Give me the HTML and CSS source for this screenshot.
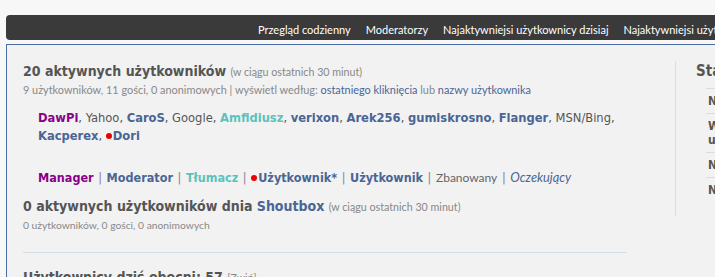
FILE: index.html
```html
<!DOCTYPE html>
<html lang="pl">
  <head>
    <meta charset="UTF-8" />
    <meta name="viewport" content="width=device-width, initial-scale=1.0" />
    <title>Kto jest online</title>
    <link rel="stylesheet" href="styles.css">
  </head>
  <body>
    <div class="wrap">
      <ul class="navbar">
        <li><a href="#">Przegląd codzienny</a></li>
        <li><a href="#">Moderatorzy</a></li>
        <li><a href="#">Najaktywniejsi użytkownicy dzisiaj</a></li>
        <li><a href="#">Najaktywniejsi użytkownicy</a></li>
      </ul>

      <div class="panel">
        <div class="main">
          <h3 class="title">20 aktywnych użytkowników <span class="hint">(w ciągu ostatnich 30 minut)</span></h3>
          <p class="stats">9 użytkowników, 11 gości, 0 anonimowych | wyświetl według: <a href="#">ostatniego kliknięcia</a> lub <a href="#">nazwy użytkownika</a></p>

          <p class="users">
            <a class="manager" href="#">DawPi</a>, <span class="bot">Yahoo</span>,
            <a class="mod" href="#">CaroS</a>, <span class="bot">Google</span>,
            <a class="translator" href="#">Amfidiusz</a>, <a class="user" href="#">verixon</a>,
            <a class="user" href="#">Arek256</a>, <a class="user" href="#">gumiskrosno</a>,
            <a class="user" href="#">Flanger</a>, <span class="bot">MSN/Bing</span>,
            <a class="user" href="#">Kacperex</a>, <a class="user" href="#"><span class="dot"></span>Dori</a>
          </p>

          <p class="legend">
            <span class="manager">Manager</span> <span class="sep">|</span>
            <span class="mod">Moderator</span> <span class="sep">|</span>
            <span class="translator">Tłumacz</span> <span class="sep">|</span>
            <span class="user"><span class="dot"></span>Użytkownik*</span> <span class="sep">|</span>
            <span class="user">Użytkownik</span> <span class="sep">|</span>
            <span class="banned">Zbanowany</span> <span class="sep">|</span>
            <span class="waiting">Oczekujący</span>
          </p>

          <h3 class="title">0 aktywnych użytkowników dnia <a href="#">Shoutbox</a> <span class="hint">(w ciągu ostatnich 30 minut)</span></h3>
          <p class="stats small">0 użytkowników, 0 gości, 0 anonimowych</p>

          <hr class="divider" />

          <h3 class="title">Użytkownicy dziś obecni: 57 <span class="toggle">[Zwiń]</span></h3>
        </div>

        <div class="side">
          <h3 class="side-title">Statystyki</h3>
          <ul class="side-list">
            <li>Najnowszy użytkownik</li>
            <li>Wszystkich<br />użytkowników</li>
            <li>Najwięcej online</li>
            <li>Najnowszy temat</li>
          </ul>
        </div>
      </div>
    </div>
  </body>
</html>
```

FILE: styles.css
```css
html,
body {
  overflow: hidden;
}
body {
  margin: 0;
  background-color: #f7f7f7;
  font-family: Lato, "Open Sans", sans-serif;
  color: #555;
}
a {
  text-decoration: none;
}
.wrap {
  width: 1100px;
  padding: 15px 0 0 6px;
}
.navbar {
  display: flex;
  gap: 15px;
  list-style: none;
  margin: 0;
  height: 25px;
  padding: 0 0 0 252px;
  align-items: center;
  background-color: #3a3a3a;
  border-radius: 4px 0 0 4px;
}
.navbar a {
  color: #fff;
  font-size: 11px;
}
.panel {
  display: flex;
  margin-top: 4px;
  padding: 16px 0 40px 16px;
  background-color: #f2f2f2;
  border-top: 1px solid #4a6ca3;
  border-left: 1px solid #4a6ca3;
}
.main {
  width: 603px;
}
.title {
  margin: 0;
  font-family: "DejaVu Sans Condensed", "DejaVu Sans", sans-serif;
  font-size: 14px;
  font-weight: bold;
  line-height: 20px;
  color: #555;
}
.title a {
  color: #4a6595;
}
.hint,
.toggle {
  font-family: Lato, "Open Sans", sans-serif;
  font-size: 10.7px;
  font-weight: normal;
  color: #888;
}
.stats {
  margin: 0;
  font-size: 10.9px;
  line-height: 16px;
  color: #888;
}
.stats a {
  color: #4a6595;
}
.stats.small {
  font-size: 10.3px;
  margin-bottom: 19px;
}
.users {
  margin: 11px 0 0 15px;
  font-family: "DejaVu Sans Condensed", "DejaVu Sans", sans-serif;
  font-size: 12.8px;
  line-height: 18px;
  color: #555;
}
.users a {
  font-weight: bold;
}
.legend {
  margin: 23px 0 9px 15px;
  font-family: "DejaVu Sans Condensed", "DejaVu Sans", sans-serif;
  font-size: 12.5px;
  line-height: 18px;
  color: #555;
}
.legend span {
  font-weight: bold;
}
.legend .sep {
  margin: 0 1px;
  font-weight: normal;
  color: #8a7a9a;
}
.manager {
  color: #8b008b;
}
.mod,
.user {
  color: #4a6595;
}
.translator {
  color: #5cc2bd;
}
.bot {
  color: #555;
}
.legend .banned {
  font-family: Lato, "Open Sans", sans-serif;
  font-size: 12px;
  font-weight: normal;
  color: #666;
}
.legend .waiting {
  font-family: Lato, "Open Sans", sans-serif;
  font-size: 12.8px;
  font-weight: normal;
  font-style: italic;
  color: #4a6595;
}
.dot {
  display: inline-block;
  width: 6px;
  height: 6px;
  margin: 0 1px 1px 0;
  border-radius: 50%;
  background-color: #e00;
}
.divider {
  margin: 0 0 14px;
  border: none;
  border-top: 1px solid #d3dbe3;
}
.side {
  margin-left: 49px;
  padding-left: 20px;
  border-left: 1px solid #ddd;
  width: 300px;
  height: 155px;
}
.side-title {
  margin: 0;
  font-family: "DejaVu Sans Condensed", "DejaVu Sans", sans-serif;
  font-size: 15px;
  font-weight: bold;
  color: #555;
  line-height: 20px;
}
.side-list {
  list-style: none;
  margin: 7px 0 0 10px;
  padding: 0;
}
.side-list li {
  border-top: 1px solid #ddd;
  padding: 5px 2px;
  font-family: "DejaVu Sans Condensed", "DejaVu Sans", sans-serif;
  font-size: 12px;
  font-weight: bold;
  line-height: 14px;
}
```
